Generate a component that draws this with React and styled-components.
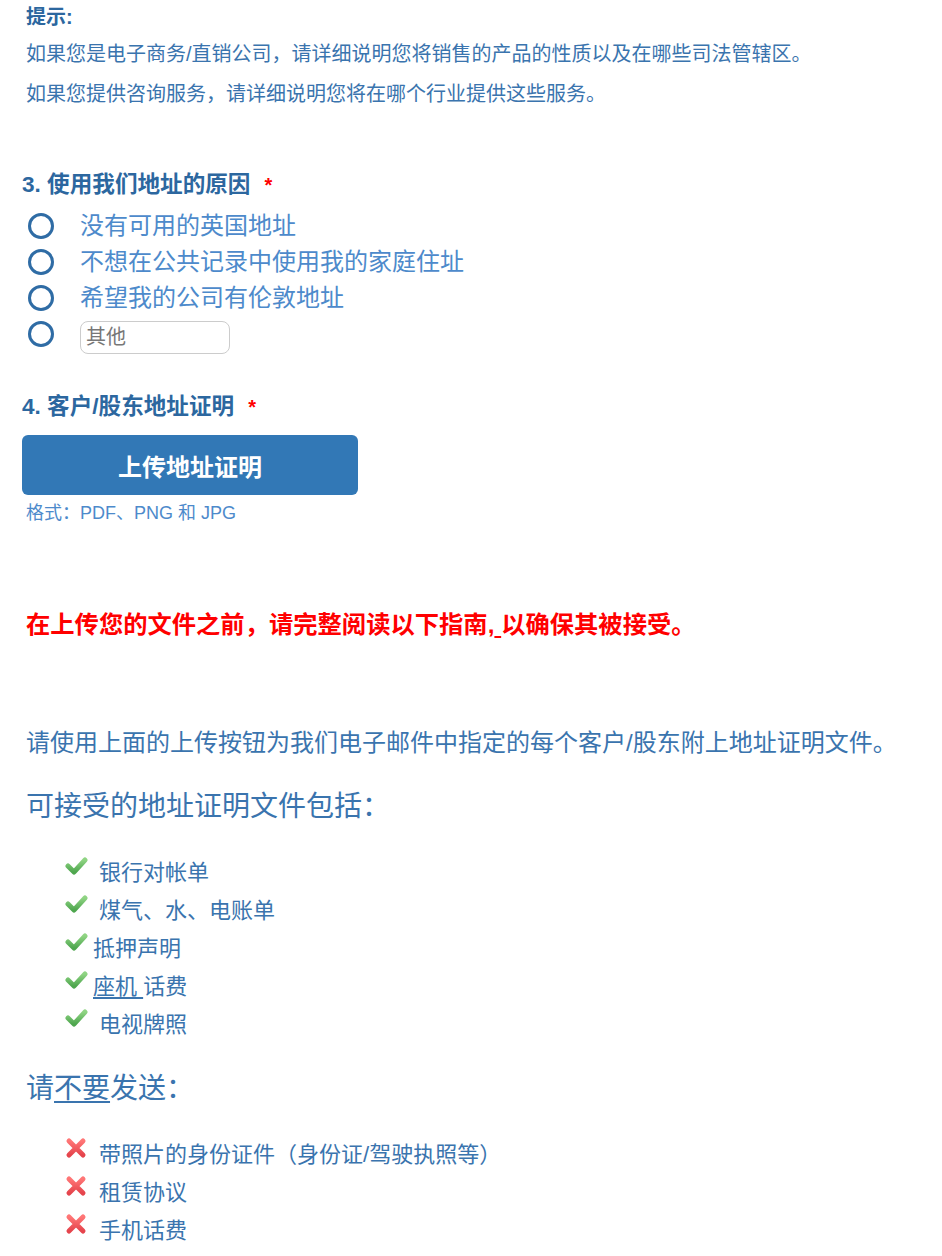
import React from "react";
import styled, { createGlobalStyle } from "styled-components";

const Global = createGlobalStyle`
  html, body { margin: 0; padding: 0; background: #fff; }
  body { font-family: "Liberation Sans", Arial, "Noto Sans CJK SC", sans-serif; }
`;

const Page = styled.div`
  width: 942px;
  padding: 0 0 0 26px;
  box-sizing: border-box;
  color: #3a74ae;
`;

const TipTitle = styled.div`
  font-size: 20px;
  font-weight: bold;
  line-height: 34px;
  color: #2c679f;
`;

const TipLine = styled.div`
  font-size: 20px;
  line-height: 40px;
  color: #3a74ae;
`;

const Question = styled.div`
  margin: ${(p) => p.$mt}px 0 0 -4px;
  font-size: 22.6px;
  font-weight: bold;
  line-height: 30px;
  color: #2c679f;
  display: flex;
  align-items: center;
`;

const Star = styled.span`
  color: #ff0000;
  margin-left: 14px;
  font-size: 20px;
`;

const Options = styled.div`
  margin-top: 8px;
  display: flex;
  flex-direction: column;
`;

const OptionRow = styled.label`
  display: flex;
  align-items: ${(p) => (p.$top ? "flex-start" : "center")};
  height: 36px;
`;

const Radio = styled.span`
  width: 20px;
  height: 20px;
  border: 3px solid #2f6ca5;
  border-radius: 50%;
  margin-left: 2px;
  margin-right: 26px;
  flex: none;
  margin-top: ${(p) => (p.$top ? "5px" : "0")};
`;

const OptionText = styled.span`
  font-size: 24px;
  line-height: 36px;
  color: #4d8acb;
`;

const OtherInput = styled.input`
  width: 150px;
  height: 33px;
  margin-top: 5px;
  box-sizing: border-box;
  border: 1px solid #cccccc;
  border-radius: 8px;
  padding: 0 5px;
  font-size: 20px;
  font-family: "Liberation Sans", "Noto Sans CJK SC", sans-serif;
  color: #555;
  &::placeholder { color: #777; }
`;

const UploadButton = styled.button`
  margin: 13px 0 0 -4px;
  width: 336px;
  height: 60px;
  border: none;
  border-radius: 6px;
  background: #3278b6;
  color: #fff;
  font-size: 24px;
  font-weight: bold;
  font-family: "Liberation Sans", "Noto Sans CJK SC", sans-serif;
  display: block;
`;

const Formats = styled.div`
  margin-top: 6px;
  font-size: 18px;
  line-height: 24px;
  color: #4d8acb;
`;

const Warning = styled.div`
  margin-top: 85px;
  font-size: 24.3px;
  font-weight: bold;
  line-height: 30px;
  color: #ff0000;
`;

const Para = styled.div`
  margin-top: 87px;
  font-size: 24px;
  line-height: 32px;
  color: #3a74ae;
`;

const SubHead = styled.div`
  margin-top: ${(p) => p.$mt}px;
  font-size: 28px;
  line-height: 40px;
  color: #3a74ae;
`;

const List = styled.ul`
  list-style: none;
  margin: ${(p) => p.$mt}px 0 0 39px;
  padding: 0;
`;

const Item = styled.li`
  display: flex;
  align-items: center;
  height: 38px;
  font-size: 22px;
  color: #3a74ae;
  white-space: pre;
`;

const IconBox = styled.span`
  width: 23px;
  height: 22px;
  margin-right: 5px;
  margin-top: -8px;
  flex: none;
  display: inline-flex;
`;

const U = styled.span`
  text-decoration: underline;
  text-underline-offset: 3px;
`;

const Check = () => (
  <IconBox>
    <svg width="23" height="22" viewBox="0 0 23 22">
      <defs>
        <linearGradient id="g" x1="0" y1="0" x2="0" y2="1">
          <stop offset="0" stopColor="#8fd483" />
          <stop offset="1" stopColor="#4ea64e" />
        </linearGradient>
      </defs>
      <path d="M3 11 L9 17 L20 5" fill="none" stroke="url(#g)" strokeWidth="5" strokeLinecap="round" strokeLinejoin="round" />
    </svg>
  </IconBox>
);

const Cross = () => (
  <IconBox>
    <svg width="23" height="22" viewBox="0 0 23 22">
      <defs>
        <linearGradient id="r" x1="0" y1="0" x2="0" y2="1">
          <stop offset="0" stopColor="#ff7676" />
          <stop offset="1" stopColor="#e5444c" />
        </linearGradient>
      </defs>
      <path d="M4 4 L18 18 M18 4 L4 18" fill="none" stroke="url(#r)" strokeWidth="5" strokeLinecap="round" />
    </svg>
  </IconBox>
);

export default function App() {
  const options = ["没有可用的英国地址", "不想在公共记录中使用我的家庭住址", "希望我的公司有伦敦地址"];
  return (
    <Page>
      <Global />
      <TipTitle>提示:</TipTitle>
      <TipLine>如果您是电子商务/直销公司，请详细说明您将销售的产品的性质以及在哪些司法管辖区。</TipLine>
      <TipLine>如果您提供咨询服务，请详细说明您将在哪个行业提供这些服务。</TipLine>

      <Question $mt={56}>3. 使用我们地址的原因<Star>*</Star></Question>
      <Options>
        {options.map((o) => (
          <OptionRow key={o}>
            <Radio />
            <OptionText>{o}</OptionText>
          </OptionRow>
        ))}
        <OptionRow $top>
          <Radio $top />
          <OtherInput placeholder="其他" />
        </OptionRow>
      </Options>

      <Question $mt={40}>4. 客户/股东地址证明<Star>*</Star></Question>
      <UploadButton>上传地址证明</UploadButton>
      <Formats>格式：PDF、PNG 和 JPG</Formats>

      <Warning>在上传您的文件之前，请完整阅读以下指南,<U> </U>以确保其被接受。</Warning>

      <Para>请使用上面的上传按钮为我们电子邮件中指定的每个客户/股东附上地址证明文件。</Para>

      <SubHead $mt={28}>可接受的地址证明文件包括：</SubHead>
      <List $mt={24}>
        <Item><Check /> 银行对帐单</Item>
        <Item><Check /> 煤气、水、电账单</Item>
        <Item><Check />抵押声明</Item>
        <Item><Check /><U>座机 </U>话费</Item>
        <Item><Check /> 电视牌照</Item>
      </List>

      <SubHead $mt={28}>请<U>不要</U>发送：</SubHead>
      <List $mt={24}>
        <Item><Cross /> 带照片的身份证件（身份证/驾驶执照等）</Item>
        <Item><Cross /> 租赁协议</Item>
        <Item><Cross /> 手机话费</Item>
      </List>
    </Page>
  );
}
